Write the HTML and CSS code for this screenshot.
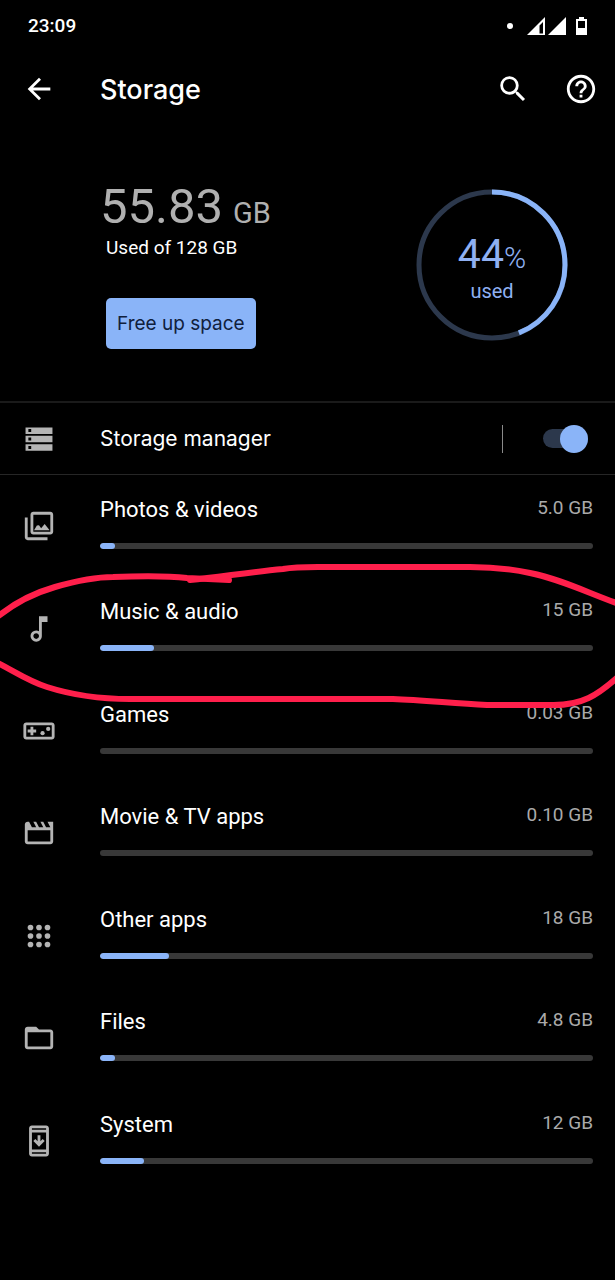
FILE: index.html
```html
<!DOCTYPE html>
<html lang="en">
<head>
    <meta charset="UTF-8">
    <meta name="viewport" content="width=device-width, initial-scale=1.0">
    <title>Storage</title>
    <link rel="stylesheet" href="styles.css">
</head>
<body>
    <div class="status-bar">
        <span class="clock">23:09</span>
        <svg class="status-icons" viewBox="0 0 82 20" aria-hidden="true">
            <circle cx="4" cy="10" r="3"/>
            <path fill-rule="evenodd" d="M21 19L39 1V19ZM33.500 9.500V17.500H37V6Z"/>
            <path d="M42 19L60 1V19Z"/>
            <path fill-rule="evenodd" d="M70 3H73V1H78V3H81V19H70ZM72 5V12H79V5Z"/>
        </svg>
    </div>

    <header class="app-bar">
        <button class="icon-button" aria-label="Back">
            <svg class="icon" viewBox="0 0 24 24"><path d="M20 11H7.830l5.590-5.590L12 4l-8 8 8 8 1.410-1.410L7.830 13H20v-2z"/></svg>
        </button>
        <h1>Storage</h1>
        <button class="icon-button" aria-label="Search">
            <svg class="icon" viewBox="0 0 24 24"><path d="M15.500 14h-.79l-.28-.27A6.471 6.471 0 0 0 16 9.500 6.500 6.500 0 1 0 9.500 16c1.610 0 3.090-.59 4.230-1.570l.27.28v.79l5 4.990L20.490 19l-4.990-5zm-6 0C7.010 14 5 11.990 5 9.500S7.010 5 9.500 5 14 7.010 14 9.500 11.990 14 9.500 14z"/></svg>
        </button>
        <button class="icon-button" aria-label="Help">
            <svg class="icon" viewBox="0 0 24 24"><path d="M11 18h2v-2h-2v2zm1-16C6.480 2 2 6.480 2 12s4.480 10 10 10 10-4.480 10-10S17.520 2 12 2zm0 18c-4.410 0-8-3.590-8-8s3.590-8 8-8 8 3.590 8 8-3.590 8-8 8zm0-14c-2.210 0-4 1.790-4 4h2c0-1.100.9-2 2-2s2 .9 2 2c0 2-3 1.750-3 5h2c0-2.250 3-2.500 3-5 0-2.210-1.790-4-4-4z"/></svg>
        </button>
    </header>

    <main>
        <section class="summary">
            <div class="summary-text">
                <p class="used-total">55.83 <span class="unit">GB</span></p>
                <p class="used-of">Used of 128 GB</p>
                <button class="free-up">Free up space</button>
            </div>
            <div class="donut">
                <svg class="donut-ring" viewBox="0 0 152 152" aria-hidden="true">
                    <circle class="ring-track" cx="76" cy="76" r="73"/>
                    <circle class="ring-value" cx="76" cy="76" r="73" pathLength="100" stroke-dasharray="44 100" transform="rotate(-90 76 76)"/>
                </svg>
                <div class="donut-label">
                    <p class="percent">44<span class="percent-sign">%</span></p>
                    <p class="percent-used">used</p>
                </div>
            </div>
        </section>

        <div class="manager">
            <svg class="icon" viewBox="0 0 24 24"><path fill-rule="evenodd" d="M2.500 3.800h19v4.600h-19zM4.500 5v2h2V5zM2.500 9.700h19v4.600h-19zM4.500 11v2h2v-2zM2.500 15.700h19v4.600h-19zM4.500 17v2h2v-2z"/></svg>
            <label class="manager-label" for="manager">Storage manager</label>
            <input class="switch" type="checkbox" role="switch" id="manager" checked>
        </div>

        <ul class="categories">
            <li class="category">
                <svg class="icon" viewBox="0 0 24 24"><path d="M20 4v12H8V4h12m0-2H8c-1.100 0-2 .9-2 2v12c0 1.100.9 2 2 2h12c1.100 0 2-.9 2-2V4c0-1.100-.9-2-2-2zm-9.500 9.670l-2 3.330h11l-3.500-4.500-2.500 3-1.500-2zM2 6v14c0 1.100.9 2 2 2h14v-2H4V6H2z"/></svg>
                <div class="category-body">
                    <div class="category-text"><span class="name">Photos &amp; videos</span><span class="size">5.0 GB</span></div>
                    <div class="bar"><div class="bar-fill" style="width: 3%"></div></div>
                </div>
            </li>
            <li class="category">
                <svg class="icon" viewBox="0 0 24 24"><path d="M12 3l.01 10.550c-.59-.34-1.270-.55-2-.55a4 4 0 1 0 0 8c2.220 0 3.990-1.790 3.990-4V7h4V3h-6zm-1.990 16c-1.100 0-2-.9-2-2s.9-2 2-2 2 .9 2 2-.9 2-2 2z"/></svg>
                <div class="category-body">
                    <div class="category-text"><span class="name">Music &amp; audio</span><span class="size">15 GB</span></div>
                    <div class="bar"><div class="bar-fill" style="width: 11%"></div></div>
                </div>
            </li>
            <li class="category">
                <svg class="icon" viewBox="0 0 24 24"><path fill-rule="evenodd" d="M3 6h18c1.100 0 2 .9 2 2v8c0 1.100-.9 2-2 2H3c-1.100 0-2-.9-2-2V8c0-1.100.9-2 2-2zm0 2v8h18V8z"/><path d="M6 9h2v2h2v2H8v2H6v-2H4v-2h2z"/><circle cx="14.500" cy="13.500" r="1.500"/><circle cx="18.500" cy="10.500" r="1.500"/></svg>
                <div class="category-body">
                    <div class="category-text"><span class="name">Games</span><span class="size">0.03 GB</span></div>
                    <div class="bar"></div>
                </div>
            </li>
            <li class="category">
                <svg class="icon" viewBox="0 0 24 24"><path d="M18 4l2 4h-3l-2-4h-2l2 4h-3l-2-4H8l2 4H7L5 4H4c-1.100 0-1.990.9-1.990 2L2 18c0 1.100.9 2 2 2h16c1.100 0 2-.9 2-2V4h-4zm2 14H4v-8h16v8z"/></svg>
                <div class="category-body">
                    <div class="category-text"><span class="name">Movie &amp; TV apps</span><span class="size">0.10 GB</span></div>
                    <div class="bar"></div>
                </div>
            </li>
            <li class="category">
                <svg class="icon" viewBox="0 0 24 24"><circle cx="6" cy="6" r="2"/><circle cx="12" cy="6" r="2"/><circle cx="18" cy="6" r="2"/><circle cx="6" cy="12" r="2"/><circle cx="12" cy="12" r="2"/><circle cx="18" cy="12" r="2"/><circle cx="6" cy="18" r="2"/><circle cx="12" cy="18" r="2"/><circle cx="18" cy="18" r="2"/></svg>
                <div class="category-body">
                    <div class="category-text"><span class="name">Other apps</span><span class="size">18 GB</span></div>
                    <div class="bar"><div class="bar-fill" style="width: 14%"></div></div>
                </div>
            </li>
            <li class="category">
                <svg class="icon" viewBox="0 0 24 24"><path fill-rule="evenodd" d="M4 4h6l2 2h8c1.100 0 2 .9 2 2v10c0 1.100-.9 2-2 2H4c-1.100 0-2-.9-2-2V6c0-1.100.9-2 2-2zm0 4v10h16V8z"/></svg>
                <div class="category-body">
                    <div class="category-text"><span class="name">Files</span><span class="size">4.8 GB</span></div>
                    <div class="bar"><div class="bar-fill" style="width: 3%"></div></div>
                </div>
            </li>
            <li class="category">
                <svg class="icon" viewBox="0 0 24 24"><path fill-rule="evenodd" d="M7 1h10c1.100 0 2 .9 2 2v18c0 1.100-.9 2-2 2H7c-1.100 0-2-.9-2-2V3c0-1.100.9-2 2-2zm0 2v1h10V3zm0 3v12h10V6zm0 14v1h10v-1z"/><path d="M16 12l-1.400-1.400-1.600 1.600V8h-2v4.200l-1.600-1.600L8 12l4 4z"/></svg>
                <div class="category-body">
                    <div class="category-text"><span class="name">System</span><span class="size">12 GB</span></div>
                    <div class="bar"><div class="bar-fill" style="width: 9%"></div></div>
                </div>
            </li>
            <li class="marker" aria-hidden="true">
                <!-- hand-drawn loop around Music & audio -->
                <svg class="marker-line" viewBox="0 0 615 250">
                    <path d="M-4 143C14 128 34 118 55 112C76 106 97 102 113 102C138 101 170 101 187 103L229 105"/>
                    <path d="M190 105C220 102 250 97 283 94C294 92 305 92 318 92H470C492 92 511 94 530 98C560 104 586 117 619 129"/>
                    <path d="M-4 187C14 196 28 206 47 212C72 220 98 224 130 224H393C422 225 450 228 487 230H550C582 231 598 220 619 201"/>
                </svg>
            </li>
        </ul>
    </main>
</body>
</html>
```
FILE: styles.css
```css
* {
    box-sizing: border-box;
}
body {
    display: flex;
    flex-direction: column;
    min-height: 100vh;
    margin: 0;
    background-color: #000;
    color: #fff;
    font-family: Roboto, sans-serif;
    overflow-x: hidden;
}
h1, p, ul {
    margin: 0;
    padding: 0;
    font-weight: 400;
}
button {
    border: none;
    cursor: pointer;
}
.icon {
    display: block;
    width: 34px;
    height: 34px;
    fill: currentColor;
}

/* top bars */
.status-bar {
    display: flex;
    align-items: center;
    justify-content: space-between;
    height: 51px;
    padding: 0 27px 0 28px;
}
.clock {
    font-size: 19px;
    font-weight: 500;
}
.status-icons {
    width: 82px;
    height: 20px;
    fill: #fff;
}
.app-bar {
    display: flex;
    align-items: center;
    gap: 34px;
    height: 76px;
    padding: 0 17px 0 22px;
}
.app-bar h1 {
    flex: 1;
    padding-left: 10px;
    font-family: Inter, sans-serif;
    font-size: 27px;
    font-weight: 500;
}
.icon-button {
    padding: 0;
    background: none;
    color: #fff;
}

/* usage summary */
main {
    display: flex;
    flex: 1;
    flex-direction: column;
}
.summary {
    display: flex;
    justify-content: space-between;
    padding: 53px 47px 52px 100px;
    border-bottom: 2px solid #1a1a1a;
}
.used-total {
    display: flex;
    align-items: baseline;
    gap: 10px;
    color: #b0b0b0;
    font-size: 49px;
    line-height: 54px;
}
.unit {
    font-size: 29px;
    line-height: 30px;
}
.used-of {
    padding-left: 6px;
    font-size: 19px;
    line-height: 28px;
}
.free-up {
    height: 51px;
    margin: 36px 0 0 6px;
    padding: 0 11px;
    border-radius: 5px;
    background-color: #8ab4f8;
    color: #10203c;
    font-family: Inter, sans-serif;
    font-size: 19px;
}
.donut {
    display: grid;
    place-items: center;
    align-self: flex-start;
    margin-top: 9px;
    color: #8fb0f2;
}
.donut-ring, .donut-label {
    grid-area: 1 / 1;
}
.donut-ring {
    width: 152px;
    fill: none;
    stroke-width: 5;
}
.ring-track {
    stroke: #2c384c;
}
.ring-value {
    stroke: #8ab4f8;
}
.donut-label {
    text-align: center;
}
.percent {
    font-size: 41px;
    line-height: 52px;
}
.percent-sign {
    font-size: 30px;
    font-weight: 300;
    line-height: 30px;
}
.percent-used {
    font-size: 20px;
    line-height: 22px;
}

/* storage manager row */
.manager {
    display: flex;
    align-items: center;
    height: 72px;
    padding: 0 27px 0 22px;
    border-bottom: 1px solid #262626;
}
.manager .icon, .category .icon {
    color: #b4b4b4;
}
.manager-label {
    flex: 1;
    padding-left: 44px;
    border-right: 1px solid #8a8a8a;
    font-family: Inter, sans-serif;
    font-size: 21px;
    line-height: 28px;
}
.switch {
    display: flex;
    align-items: center;
    justify-content: flex-end;
    appearance: none;
    width: 45px;
    height: 19px;
    margin: 0 0 0 40px;
    border-radius: 10px;
    background-color: #2c384c;
    cursor: pointer;
}
.switch::before {
    content: "";
    flex: none;
    width: 28px;
    height: 28px;
    border-radius: 50%;
    background-color: #8ab4f8;
}

/* categories */
.categories {
    position: relative;
    display: grid;
    flex: 1;
    grid-auto-rows: 1fr;
    margin-bottom: 88px;
    list-style: none;
}
.category {
    display: grid;
    grid-template-columns: 34px 1fr;
    gap: 44px;
    align-items: center;
    padding: 0 22px;
}
.category-body {
    align-self: start;
    padding-top: 20px;
}
.category-text {
    display: flex;
    justify-content: space-between;
    margin-bottom: 18px;
    line-height: 30px;
}
.name {
    font-size: 22px;
}
.size {
    color: #aaa;
    font-size: 19px;
    line-height: 26px;
}
.bar {
    height: 6px;
    border-radius: 3px;
    background-color: #383838;
    overflow: hidden;
}
.bar-fill {
    height: 100%;
    border-radius: 3px;
    background-color: #8ab4f8;
}
.marker {
    position: absolute;
    top: 0;
    left: 0;
    width: 100%;
    pointer-events: none;
}
.marker-line {
    display: block;
    width: 100%;
    fill: none;
    stroke: #ff1f4b;
    stroke-width: 6;
    stroke-linecap: round;
}
```
